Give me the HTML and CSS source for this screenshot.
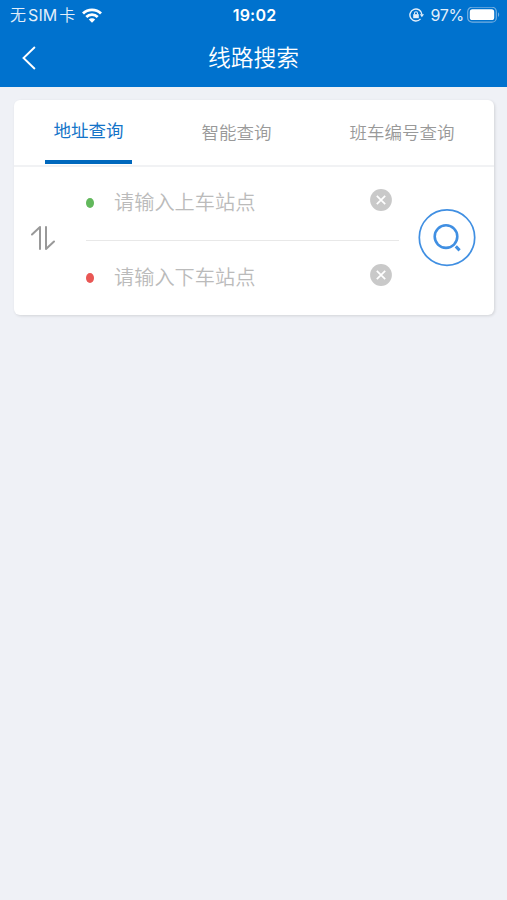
FILE: index.html
```html
<!DOCTYPE html>
<html lang="zh-CN">
<head>
  <meta charset="UTF-8">
  <meta name="viewport" content="width=device-width, initial-scale=1.0">
  <title>线路搜索</title>
  <link rel="stylesheet" href="styles.css">
</head>
<body>
  <header>
    <div class="status-bar">
      <div class="status-left">
        <span class="carrier">无<b>SIM</b>卡</span>
        <svg width="20" height="15" viewBox="0 0 20 15" fill="none" stroke="#fff" stroke-width="2.8">
          <path d="M1 5.6a12.8 12.8 0 0 1 18 0M4.3 9a8.1 8.1 0 0 1 11.4 0"/>
          <path d="M10 14.8l-3.2-3.3a4.6 4.6 0 0 1 6.4 0z" fill="#fff" stroke="none"/>
        </svg>
      </div>
      <span class="time">19:02</span>
      <div class="status-right">
        <svg width="15" height="14" viewBox="0 0 15 14" fill="none" stroke="#e3effa" stroke-width="1.4">
          <path d="M11.5 10.9a6 6 0 1 1 1.4-4.4"/>
          <path d="M10.8 6.2h4.2l-2.1 3z" fill="#e3effa" stroke="none"/>
          <path d="M4.2 6.2h5.6v4H4.2z" fill="#e3effa" stroke="none"/>
          <path d="M5.5 6.5V5.2a1.5 1.5 0 0 1 3 0v1.3" stroke-width="1.1"/>
        </svg>
        <span class="percent">97%</span>
        <svg width="33" height="17" viewBox="0 0 33 17">
          <rect x="0.7" y="0.2" width="28.6" height="15" rx="4.5" fill="none" stroke="#75afe0" stroke-width="1.2"/>
          <rect x="2.8" y="2.3" width="24.4" height="10.8" rx="2.6" fill="#fff"/>
          <path d="M31 5.3c1.6.8 1.6 4 0 4.8z" fill="#75afe0"/>
        </svg>
      </div>
    </div>
    <div class="nav-bar">
      <a href="#" class="back">
        <svg width="14" height="24" viewBox="0 0 14 24" fill="none" stroke="#fff" stroke-width="1.9">
          <path d="M12.9 1L1.5 12l11.4 11"/>
        </svg>
      </a>
      <h1>线路搜索</h1>
    </div>
  </header>

  <div class="card">
    <div class="tabs">
      <a href="#" class="tab active">地址查询</a>
      <a href="#" class="tab">智能查询</a>
      <a href="#" class="tab">班车编号查询</a>
    </div>
    <div class="search-form">
      <button class="swap">
        <svg width="24" height="26" viewBox="0 0 24 26" fill="none" stroke="#999" stroke-width="2" stroke-linecap="round" stroke-linejoin="round">
          <path d="M1 9.5L9 2v22M15 2v22l8-7.5"/>
        </svg>
      </button>
      <div class="fields">
        <div class="field">
          <span class="dot start"></span>
          <input type="text" placeholder="请输入上车站点">
          <button class="clear">
            <svg width="22" height="22" viewBox="0 0 22 22">
              <circle cx="11" cy="11" r="10.9" fill="#c9c9c9"/>
              <path d="M6.8 6.8l8.4 8.4M15.2 6.8l-8.4 8.4" stroke="#fff" stroke-width="1.7"/>
            </svg>
          </button>
        </div>
        <div class="field">
          <span class="dot end"></span>
          <input type="text" placeholder="请输入下车站点">
          <button class="clear">
            <svg width="22" height="22" viewBox="0 0 22 22">
              <circle cx="11" cy="11" r="10.9" fill="#c9c9c9"/>
              <path d="M6.8 6.8l8.4 8.4M15.2 6.8l-8.4 8.4" stroke="#fff" stroke-width="1.7"/>
            </svg>
          </button>
        </div>
      </div>
      <button class="search">
        <svg width="58" height="58" viewBox="0 0 58 58" fill="none" stroke="#408fe2">
          <circle cx="29" cy="28.6" r="27.7" stroke-width="1.7"/>
          <circle cx="28" cy="27.6" r="11.3" stroke-width="2.6"/>
          <path d="M37.8 37.4l3.8 4" stroke-width="3"/>
        </svg>
      </button>
    </div>
  </div>
</body>
</html>
```

FILE: styles.css
```css
* {
  box-sizing: border-box;
}

body {
  margin: 0;
  min-height: 100vh;
  background-color: #eff1f6;
  font-family: "Noto Sans CJK SC", sans-serif;
}

a {
  text-decoration: none;
}

button {
  padding: 0;
  border: none;
  background: none;
}

svg {
  display: block;
}

header {
  height: 87px;
  background-color: #0072ce;
  color: #fff;
}

.status-bar {
  display: grid;
  grid-template-columns: 1fr auto 1fr;
  align-items: center;
  height: 29px;
  padding: 0 7px 0 10px;
  font-size: 16px;
  line-height: 29px;
}

.status-left,
.status-right {
  display: flex;
  align-items: center;
}

.status-left {
  gap: 7px;
}

.status-right {
  justify-content: flex-end;
}

.carrier {
  color: #e3effa;
  font-weight: 350;
}

.carrier b {
  margin: 0 2px;
  font-family: Inter, sans-serif;
  font-weight: 400;
  letter-spacing: 0.1px;
}

.time {
  margin-right: 1px;
  font-family: Inter, sans-serif;
  font-weight: 600;
  letter-spacing: 0.2px;
}

.percent {
  margin: 0 3px 0 7px;
  color: #e3effa;
  font-family: Inter, sans-serif;
  font-size: 16px;
  letter-spacing: -0.3px;
}

.nav-bar {
  display: grid;
  grid-template-columns: 60px 1fr 60px;
  align-items: center;
  height: 58px;
}

.back {
  padding-left: 22px;
}

h1 {
  margin: 0;
  padding-bottom: 2px;
  font-size: 22.8px;
  font-weight: 350;
  line-height: 56px;
  text-align: center;
}

.card {
  margin: 13px 13px 0 14px;
  height: 215px;
  border-radius: 6px;
  background-color: #fff;
  box-shadow: 1px 1px 3px rgba(0, 0, 0, 0.12);
}

.tabs {
  display: flex;
  justify-content: space-between;
  height: 67px;
  padding: 0 31px;
  border-bottom: 2px solid #f1f2f4;
}

.tab {
  height: 64px;
  padding: 0 8.5px;
  color: #999;
  font-size: 17.5px;
  font-weight: 350;
  line-height: 64px;
}

.tab.active {
  border-bottom: 4px solid #0068bd;
  color: #1474c8;
  font-weight: 400;
  line-height: 60px;
}

.search-form {
  display: flex;
  align-items: center;
  height: 148px;
  padding: 0 18px 0 17px;
}

.swap,
.search {
  margin-bottom: 6px;
}

.fields {
  width: 313px;
  margin: 0 19px 0 31px;
}

.field {
  display: flex;
  align-items: center;
  height: 74px;
  padding-right: 7px;
}

.field:first-child {
  padding-bottom: 1px;
  border-bottom: 1px solid #e8e8e8;
}

.dot {
  width: 8px;
  height: 10px;
  margin-right: 20px;
  border-radius: 50%;
}

.dot.start {
  background-color: #62b85c;
}

.dot.end {
  background-color: #e95754;
}

.field input {
  flex: 1;
  min-width: 0;
  height: 40px;
  margin-bottom: 3px;
  padding: 0;
  border: none;
  outline: none;
  font-family: inherit;
  font-size: 20.2px;
  font-weight: 350;
}

.field input::placeholder {
  color: #bbb;
}

.clear {
  margin-bottom: 6px;
}
```
